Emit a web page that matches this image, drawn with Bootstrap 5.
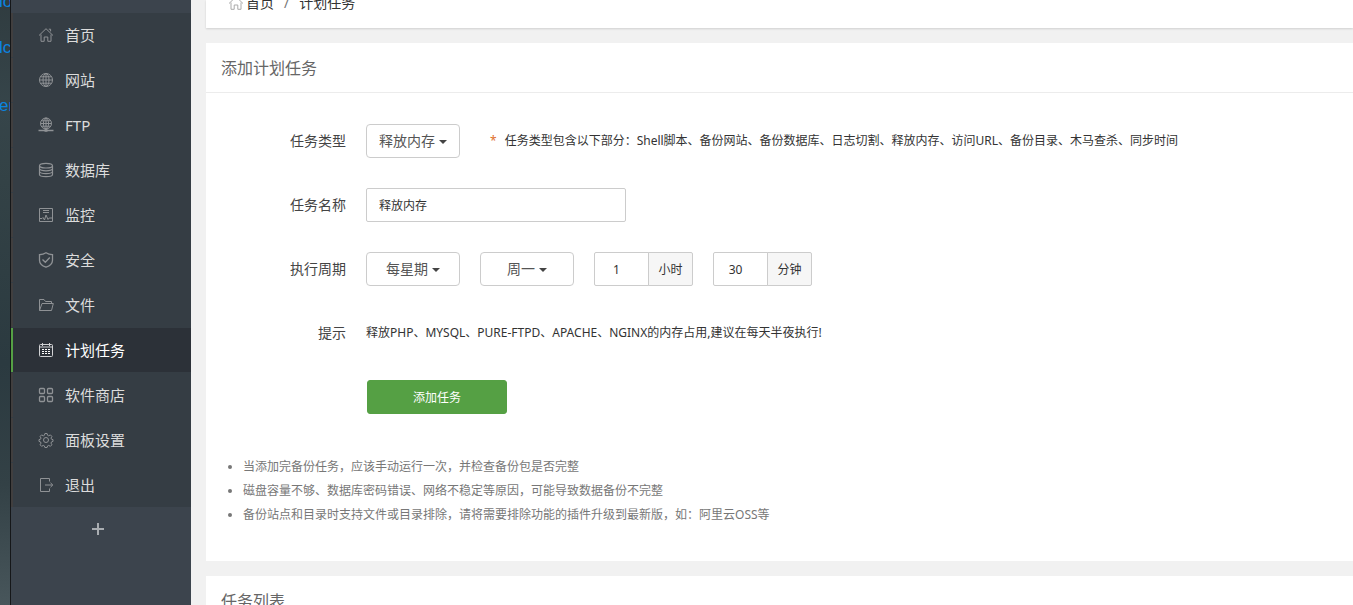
<!DOCTYPE html>
<html lang="zh-CN">
<head>
<meta charset="utf-8">
<meta name="viewport" content="width=device-width, initial-scale=1">
<title>计划任务</title>
<link rel="stylesheet" href="https://cdn.jsdelivr.net/npm/bootstrap@5.3.0/dist/css/bootstrap.min.css">
<style>
body{font-family:"Noto Sans","Noto Sans CJK SC",sans-serif;font-size:12px;line-height:20px;color:#333;background:#f1f1f1}
a{color:inherit;text-decoration:none}
svg{fill:none;stroke:currentColor;flex:none}
.backdrop{width:11px;flex:none;background:linear-gradient(#303c40,#36454a 18%,#334246 30%,#2b3a40 60%,#334146 80%,#48565b);border-right:1px solid #151719;color:#0a84e0;font-family:"Liberation Sans",sans-serif;font-size:17px;line-height:20px}
.backdrop span{display:block;margin-left:-1px}
.backdrop .first{line-height:4px}
.backdrop .second{margin-top:34px}
.backdrop .third{margin-top:38px}
.sidebar{width:180px;flex:none;background:#3c444d;padding-top:13px}
.menu-list{background:#353d44}
.menu-link{height:44px;margin-bottom:1px;padding-left:25px;gap:11px;border-left:2px solid #413f3f;font-size:15px;color:#dcdcdc}
.menu-link svg{color:#8f9295}
.menu-link.active{background:#2c3138;border-color:#55a044;color:#fff}
.menu-link.active svg{color:#d2d3d5}
.plus{color:#a9adb1;height:42px;padding:0 6px 0 0}
.content-area{padding-left:15px}
.crumbs{height:28px;padding:0 22px 15px;background:#fff;box-shadow:0 1px 2px rgba(0,0,0,.14);font-size:14px}
.crumbs a{gap:2px}
.crumbs svg{color:#aaa}
.slash{padding:0 10px;color:#777}
.panel{background:#fff;margin-bottom:15px}
.crumbs + .panel{margin-top:15px}
.panel-title{height:50px;padding:2px 15px 0;border-bottom:1px solid #ececec;font-size:16px;color:#666}
.panel-body{padding:31px 15px 34px}
.line{min-height:34px;margin-bottom:30px}
.line-name{width:125px;font-size:14px;color:#444}
.ctl{margin-left:20px}
.pick,.field{height:34px;border:1px solid #ccc;border-radius:2px;font-size:12px;line-height:20px;color:#333;padding:0 12px}
.pick{width:94px;border-radius:4px;font-size:14px;color:#555;padding:0 0 0 var(--inset);background-size:8px 4px;background-position:right var(--inset) top 15px;--inset:12px;
--bs-form-select-bg-img:url("data:image/svg+xml,%3Csvg xmlns='http://www.w3.org/2000/svg' viewBox='0 0 8 4'%3E%3Cpath d='M0 0h8L4 4z' fill='%23444'/%3E%3C/svg%3E")}
.three{--inset:19px}
.two{--inset:26px}
.star{margin:0 8px 0 30px;color:#e0702c}
.name-field{width:260px}
.unit{width:99px}
.unit .field{padding:0 10px 0 0;text-align:center;-moz-appearance:textfield}
.unit .field::-webkit-inner-spin-button{display:none}
.unit .input-group-text{width:45px;padding:2px 0 0;border-color:#ccc;border-radius:2px;background:#f6f6f6;font-size:12px;color:#333}
.go{width:140px;height:34px;padding:2px 0 0;margin-left:1px;font-size:12px;border-radius:3px;--bs-btn-color:#fff;--bs-btn-bg:#55a044;--bs-btn-border-color:#55a044;--bs-btn-hover-color:#fff;--bs-btn-hover-bg:#468937;--bs-btn-hover-border-color:#468937}
.notes{margin-top:41px;padding-left:22px;line-height:24px;color:#777}
</style>
</head>
<body>
<div class="d-flex vh-100 overflow-hidden">
  <div class="backdrop overflow-hidden" aria-hidden="true">
    <span class="first">lo</span>
    <span class="second">lc</span>
    <span class="third">er</span>
  </div>
  <nav class="sidebar">
    <div class="menu-list">
      <a class="menu-link d-flex align-items-center" href="#"><svg width="16" height="16" viewBox="0 0 16 16"><path d="M1 8.500 8 1.700l7 6.800M3 7.500v6.800h3.200V10h3.600v4.300H13V7.500M10.800 2.200h1.800v2.200"/></svg>首页</a>
      <a class="menu-link d-flex align-items-center" href="#"><svg width="16" height="16" viewBox="0 0 16 16"><circle cx="8" cy="8" r="6.500"/><ellipse cx="8" cy="8" rx="3" ry="6.500"/><path d="M8 1.500v13M1.500 8h13M2.500 4.800h11M2.500 11.200h11"/></svg>网站</a>
      <a class="menu-link d-flex align-items-center" href="#"><svg width="16" height="16" viewBox="0 0 16 16"><circle cx="8" cy="6.500" r="5.500"/><ellipse cx="8" cy="6.500" rx="2.600" ry="5.500"/><path d="M8 1v12M2.500 6.500h11M3.500 3.800h9M3.500 9.200h9"/><path d="M.5 13.500h15" stroke-width="1.500"/><path d="M6.500 13.500h3" stroke-width="2.500"/></svg>FTP</a>
      <a class="menu-link d-flex align-items-center" href="#"><svg width="16" height="16" viewBox="0 0 16 16" stroke-width="1.200"><ellipse cx="8" cy="3.700" rx="6.500" ry="2.300"/><path d="M1.500 3.700v8.800c0 1.200 2.800 2.100 6.500 2.100s6.500-.9 6.500-2.100V3.700M1.500 6.700C2 8 4.600 8.800 8 8.800S14 8 14.500 6.700M1.500 9.600c.5 1.300 3.100 2.100 6.500 2.100s6-.8 6.500-2.100"/></svg>数据库</a>
      <a class="menu-link d-flex align-items-center" href="#"><svg width="16" height="16" viewBox="0 0 16 16"><path d="M1.500 1.500h13v13h-13zM5 3.500h6M5 5.500h6M1.500 11.500H4l1-1 1.500 2.500 1.500-5 2 4.500 1.200-1.500h3.300"/></svg>监控</a>
      <a class="menu-link d-flex align-items-center" href="#"><svg width="16" height="16" viewBox="0 0 16 16" stroke-width="1.300"><path d="M8 .8c2 1.300 4 1.800 6.500 1.900v5.500c0 3.300-3 5.700-6.500 7-3.500-1.300-6.500-3.700-6.500-7V2.700C4 2.600 6 2.100 8 .8zM4.500 7.500l2.800 2.800 4.500-4.800"/></svg>安全</a>
      <a class="menu-link d-flex align-items-center" href="#"><svg width="16" height="16" viewBox="0 0 16 16"><path d="M1.500 13.500v-11H6l1.500 2h6v2M1.500 13.500l2.500-7h11.300l-1.800 7z"/></svg>文件</a>
      <a class="menu-link active d-flex align-items-center" href="#"><svg width="16" height="16" viewBox="0 0 16 16"><rect x="1.500" y="2.500" width="13" height="12" rx="1"/><path d="M1.500 5h13M4.500 1v3M11.500 1v3"/><path d="M4 7.500h8M4 9.500h8M4 11.500h8" stroke="#fff" stroke-dasharray="2 1"/></svg>计划任务</a>
      <a class="menu-link d-flex align-items-center" href="#"><svg width="16" height="16" viewBox="0 0 16 16" stroke-width="1.300"><rect x="1.500" y="1.500" width="5" height="5" rx="1"/><rect x="9.500" y="1.500" width="5" height="5" rx="1"/><rect x="1.500" y="9.500" width="5" height="5" rx="1"/><rect x="9.500" y="9.500" width="5" height="5" rx="1"/></svg>软件商店</a>
      <a class="menu-link d-flex align-items-center" href="#"><svg width="16" height="16" viewBox="0 0 16 16"><circle cx="8" cy="8" r="2.500"/><path d="M6.900 1.500h2.200l.5 1.800 1.100.5 1.700-.9 1.500 1.500-.9 1.700.5 1.100 1.500.4v1.800l-1.500.5-.5 1.200.9 1.700-1.500 1.500-1.700-.9-1.100.5-.5 1.600H6.900l-.5-1.600-1.100-.5-1.700.9-1.500-1.500.9-1.700-.5-1.200L1 9.400V7.600l1.500-.4.5-1.100-.9-1.700 1.500-1.500 1.700.9 1.100-.5z"/></svg>面板设置</a>
      <a class="menu-link d-flex align-items-center" href="#"><svg width="16" height="16" viewBox="0 0 16 16"><path d="M11.500 4.500v-3h-9v13h9v-3M7 8h7.500M12.500 5.800 14.800 8l-2.300 2.200"/></svg>退出</a>
    </div>
    <button type="button" class="plus btn border-0 w-100 d-flex align-items-center justify-content-center" aria-label="添加"><svg width="14" height="14" viewBox="0 0 14 14" stroke-width="2"><path d="M7 1v12M1 7h12"/></svg></button>
  </nav>
  <main class="content-area flex-grow-1 overflow-hidden d-flex flex-column">
    <div class="crumbs d-flex align-items-end flex-shrink-0">
      <a href="#" class="d-flex align-items-center"><svg width="16" height="16" viewBox="0 0 16 16"><path d="M1 8.500 8 1.700l7 6.800M3 7.500v6.800h3.200V10h3.600v4.300H13V7.500"/></svg>首页</a>
      <span class="slash">/</span><span>计划任务</span>
    </div>
    <section class="panel flex-shrink-0">
      <h1 class="panel-title d-flex align-items-center mb-0 fw-normal">添加计划任务</h1>
      <div class="panel-body">
        <form>
          <div class="line d-flex align-items-center">
            <label class="line-name text-end" for="kind">任务类型</label>
            <select class="pick form-select ctl" id="kind"><option>释放内存</option></select>
            <span class="star">*</span>
            <span>任务类型包含以下部分：Shell脚本、备份网站、备份数据库、日志切割、释放内存、访问URL、备份目录、木马查杀、同步时间</span>
          </div>
          <div class="line d-flex align-items-center">
            <label class="line-name text-end" for="task">任务名称</label>
            <input class="field name-field form-control ctl" id="task" type="text" value="释放内存">
          </div>
          <div class="line d-flex align-items-center">
            <label class="line-name text-end" for="cycle">执行周期</label>
            <select class="pick three form-select ctl" id="cycle"><option>每星期</option></select>
            <select class="pick two form-select ctl" aria-label="星期"><option>周一</option></select>
            <div class="unit input-group flex-nowrap ctl"><input class="field form-control" id="hour" type="number" value="1"><label class="input-group-text justify-content-center" for="hour">小时</label></div>
            <div class="unit input-group flex-nowrap ctl"><input class="field form-control" id="minute" type="number" value="30"><label class="input-group-text justify-content-center" for="minute">分钟</label></div>
          </div>
          <div class="line d-flex align-items-center">
            <span class="line-name text-end">提示</span>
            <span class="ctl">释放PHP、MYSQL、PURE-FTPD、APACHE、NGINX的内存占用,建议在每天半夜执行!</span>
          </div>
          <div class="d-flex">
            <span class="line-name"></span>
            <div class="ctl"><button type="button" class="go btn">添加任务</button></div>
          </div>
        </form>
        <ul class="notes mb-0">
          <li>当添加完备份任务，应该手动运行一次，并检查备份包是否完整</li>
          <li>磁盘容量不够、数据库密码错误、网络不稳定等原因，可能导致数据备份不完整</li>
          <li>备份站点和目录时支持文件或目录排除，请将需要排除功能的插件升级到最新版，如：阿里云OSS等</li>
        </ul>
      </div>
    </section>
    <section class="panel flex-shrink-0">
      <h2 class="panel-title d-flex align-items-center mb-0 fw-normal">任务列表</h2>
    </section>
  </main>
</div>
<script src="https://cdn.jsdelivr.net/npm/bootstrap@5.3.0/dist/js/bootstrap.bundle.min.js"></script>
</body>
</html>
